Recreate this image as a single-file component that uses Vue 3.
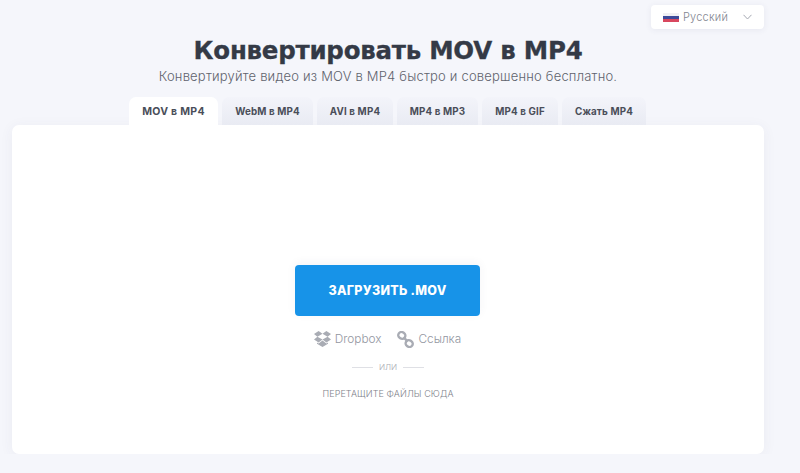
<template>
  <div class="page">
    <div class="lang-row">
      <div class="lang">
        <svg class="flag" width="16" height="9" viewBox="0 0 16 9">
          <rect width="16" height="3" fill="#f0f0f4" />
          <rect y="3" width="16" height="3" fill="#3c4a9a" />
          <rect y="6" width="16" height="3" fill="#d8475f" />
        </svg>
        <span class="lang-name">Русский</span>
        <svg class="chev" width="9" height="6" viewBox="0 0 9 6">
          <path d="M.5.8 4.5 5 8.5.8" fill="none" stroke="#a5a8b2" stroke-width="1" />
        </svg>
      </div>
    </div>

    <h1>Конвертировать MOV в MP4</h1>
    <p class="sub">Конвертируйте видео из MOV в MP4 быстро и совершенно бесплатно.</p>

    <div class="tabs">
      <div
        v-for="tab in tabs"
        :key="tab.label"
        class="tab"
        :class="{ active: tab.active }"
        :style="{ width: tab.width + 'px' }"
      >
        {{ tab.label }}
      </div>
    </div>

    <div class="card">
      <button class="upload">ЗАГРУЗИТЬ .MOV</button>
      <div class="sources">
        <span class="source">
          <svg width="17" height="16" viewBox="0 0 17 16">
            <path
              fill="#a9acb4"
              d="M4.6 0 0 3l3.4 2.8L8.5 2.7zM12.4 0 8.5 2.7l5.1 3.1L17 3zM3.4 5.8 0 8.6l4.6 3 3.9-3zM13.6 5.8 8.5 8.6l3.9 3 4.6-3zM8.5 9.4l-3.9 3-1.6-1v1.3L8.5 16l5.5-3.3v-1.3l-1.6 1z"
            />
          </svg>
          Dropbox
        </span>
        <span class="source">
          <svg width="17" height="17" viewBox="0 0 17 17">
            <g fill="none" stroke="#a9acb4" stroke-width="2.4">
              <rect x="1.2" y="1.2" width="7.2" height="6.4" rx="3.2" transform="rotate(35 4.8 4.4)" />
              <rect x="8.6" y="9.4" width="7.2" height="6.4" rx="3.2" transform="rotate(35 12.2 12.6)" />
              <path d="M6.6 6.4l4 4" />
            </g>
          </svg>
          Ссылка
        </span>
      </div>
      <div class="or"><i></i><span>ИЛИ</span><i></i></div>
      <div class="drop">ПЕРЕТАЩИТЕ ФАЙЛЫ СЮДА</div>
    </div>
  </div>
</template>

<script setup>
const tabs = [
  { label: 'MOV в MP4', width: 89, active: true },
  { label: 'WebM в MP4', width: 91 },
  { label: 'AVI в MP4', width: 76 },
  { label: 'MP4 в MP3', width: 81 },
  { label: 'MP4 в GIF', width: 76 },
  { label: 'Сжать MP4', width: 84 },
]
</script>

<style scoped>
.page {
  width: 752px;
  margin-left: 12px;
  font-family: Inter, "Open Sans", sans-serif;
  color: #343a46;
}

.lang-row {
  display: flex;
  justify-content: flex-end;
  padding-top: 5px;
}

.lang {
  width: 113px;
  height: 24px;
  box-sizing: border-box;
  padding: 0 12px;
  display: flex;
  align-items: center;
  background: #fff;
  border-radius: 4px;
  box-shadow: 0 1px 6px rgba(60, 70, 110, 0.08);
}

.lang-name {
  margin-left: 4px;
  font-size: 11px;
  color: #82858f;
  font-weight: 300;
  letter-spacing: 0.2px;
}

.chev {
  margin-left: auto;
}

h1 {
  margin: 7px 0 0;
  text-align: center;
  font-family: "DejaVu Sans", Inter, sans-serif;
  font-size: 24.5px;
  line-height: 30px;
  font-weight: 700;
  color: #343a46;
  letter-spacing: -0.25px;
  -webkit-text-stroke: 0.3px #343a46;
}

.sub {
  margin: 2px 0 0;
  text-align: center;
  font-size: 13px;
  line-height: 17px;
  font-weight: 300;
  color: #5f636d;
  letter-spacing: 0.2px;
}

.tabs {
  display: flex;
  gap: 4px;
  margin-top: 12px;
  padding-left: 117px;
}

.tab {
  height: 28px;
  display: flex;
  align-items: center;
  justify-content: center;
  border-radius: 7px 7px 0 0;
  background: linear-gradient(#f3f4fa, #e9ebf3);
  font-size: 9.8px;
  font-weight: 700;
  color: #4a4e59;
  letter-spacing: 0.15px;
  white-space: nowrap;
}

.tab.active {
  background: #fff;
  font-size: 10.5px;
  letter-spacing: 0.3px;
}

.card {
  height: 329px;
  box-sizing: border-box;
  padding-top: 140px;
  display: flex;
  flex-direction: column;
  align-items: center;
  background: #fff;
  border-radius: 7px;
  box-shadow: 0 2px 14px rgba(60, 70, 110, 0.06);
}

.upload {
  width: 185px;
  height: 51px;
  margin-right: 1px;
  border: none;
  border-radius: 4px;
  background: #1793e8;
  color: #fff;
  font-family: inherit;
  font-size: 12.5px;
  font-weight: 800;
  letter-spacing: 0.25px;
  box-shadow: 0 -2px 10px rgba(60, 70, 110, 0.06);
}

.sources {
  display: flex;
  gap: 16px;
  margin-top: 14px;
  margin-right: 1px;
}

.source {
  display: flex;
  align-items: center;
  gap: 4px;
  height: 18px;
  font-size: 11.8px;
  font-weight: 300;
  color: #93969f;
}

.or {
  display: flex;
  align-items: center;
  gap: 6px;
  margin-top: 13px;
  height: 12px;
  font-size: 8px;
  font-weight: 300;
  color: #a6a9b0;
}

.or i {
  width: 21px;
  height: 1px;
  background: #dfe0e5;
}

.drop {
  margin-top: 15px;
  font-size: 9px;
  line-height: 12px;
  font-weight: 300;
  color: #7e818a;
  letter-spacing: 0.1px;
}
</style>

<style>
html,
body {
  background: #f5f6fb;
}
</style>
